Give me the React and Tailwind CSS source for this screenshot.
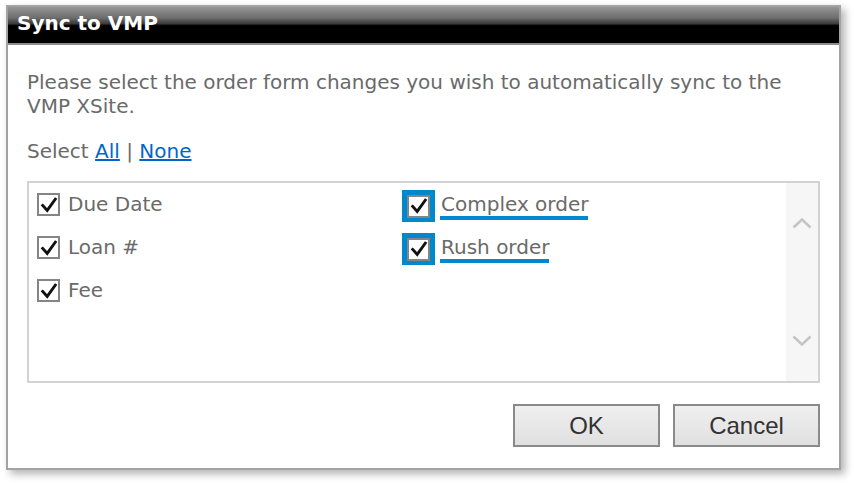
import { useState } from 'react';

function CheckBox({ checked, onToggle }) {
  return (
    <span
      onClick={onToggle}
      className="flex h-[23px] w-[23px] shrink-0 items-center justify-center border-2 border-[#858585] bg-white"
    >
      {checked && (
        <svg viewBox="0 0 20 20" className="h-[18px] w-[18px]">
          <path d="M3 10.5 L8 16 L17 3.5" fill="none" stroke="#111" strokeWidth="3.2" strokeLinecap="square" />
        </svg>
      )}
    </span>
  );
}

function Item({ label, checked, onToggle, focused }) {
  return (
    <div className="flex h-[43px] items-start">
      {focused ? (
        <span className="-ml-[4px] -mt-[3px] flex h-[32px] w-[33px] items-center justify-center bg-[#0088cc]">
          <CheckBox checked={checked} onToggle={onToggle} />
        </span>
      ) : (
        <CheckBox checked={checked} onToggle={onToggle} />
      )}
      <span
        className={`-mt-[1px] leading-[24px] text-[#6a6a6a] ${focused ? 'ml-[5px] border-b-4 border-[#0088cc] pl-[1px] leading-[22px]' : 'ml-[8px]'}`}
      >
        {label}
      </span>
    </div>
  );
}

export default function App() {
  const [fields, setFields] = useState({
    due: true,
    loan: true,
    fee: true,
    complex: true,
    rush: true,
  });
  const toggle = (k) => setFields((f) => ({ ...f, [k]: !f[k] }));

  return (
    <div className="h-[483px] w-[854px] bg-white pl-[6px] pt-[5px]" style={{ fontFamily: '"DejaVu Sans", Verdana, sans-serif' }}>
      <div className="flex h-[465px] w-[835px] flex-col border-2 border-[#a3a3a3] bg-white shadow-[4px_4px_8px_rgba(0,0,0,0.3)]">
        <div className="h-[38px] shrink-0 border-b-2 border-[#8c8c8c] bg-[linear-gradient(to_bottom,#959595_0%,#6e6e6e_30%,#3c3c3c_46%,#000_52%,#000_100%)] pl-[9px] pt-[1px] text-[20px] font-bold leading-[30px] text-white">
          Sync to VMP
        </div>

        <div className="flex flex-1 flex-col px-[19px] pt-[25px] text-[20px] text-[#6a6a6a]">
          <p className="leading-[24px]">
            Please select the order form changes you wish to automatically sync to the VMP XSite.
          </p>

          <p className="mt-[21px] leading-[24px]">
            Select <a href="#" className="text-[#0066cc] underline">All</a> |{' '}
            <a href="#" className="text-[#0066cc] underline">None</a>
          </p>

          <div className="mt-[18px] flex h-[202px] border-2 border-[#d2d2d2]">
            <div className="grid flex-1 grid-cols-[369px_1fr] pl-[8px] pt-[10px]">
              <div>
                <Item label="Due Date" checked={fields.due} onToggle={() => toggle('due')} />
                <Item label="Loan #" checked={fields.loan} onToggle={() => toggle('loan')} />
                <Item label="Fee" checked={fields.fee} onToggle={() => toggle('fee')} />
              </div>
              <div>
                <Item label="Complex order" checked={fields.complex} onToggle={() => toggle('complex')} focused />
                <Item label="Rush order" checked={fields.rush} onToggle={() => toggle('rush')} focused />
              </div>
            </div>
            <div className="flex w-[32px] flex-col items-center justify-between bg-[#f6f6f6] pb-[34px] pt-[34px]">
              <svg viewBox="0 0 20 12" className="h-[12px] w-[20px]">
                <path d="M1.5 10.5 L10 2.5 L18.5 10.5" fill="none" stroke="#c4c4c4" strokeWidth="2.5" />
              </svg>
              <svg viewBox="0 0 20 12" className="h-[12px] w-[20px]">
                <path d="M1.5 1.5 L10 9.5 L18.5 1.5" fill="none" stroke="#c4c4c4" strokeWidth="2.5" />
              </svg>
            </div>
          </div>

          <div className="mt-[21px] flex justify-end gap-[13px]" style={{ fontFamily: '"Liberation Sans", Arial, sans-serif' }}>
            <button className="h-[43px] w-[147px] border-2 border-[#8a8a8a] bg-[linear-gradient(to_bottom,#efefef,#e0e0e0)] text-[24px] text-[#333]">
              OK
            </button>
            <button className="h-[43px] w-[147px] border-2 border-[#8a8a8a] bg-[linear-gradient(to_bottom,#efefef,#e0e0e0)] text-[24px] text-[#333]">
              Cancel
            </button>
          </div>
        </div>
      </div>
    </div>
  );
}
